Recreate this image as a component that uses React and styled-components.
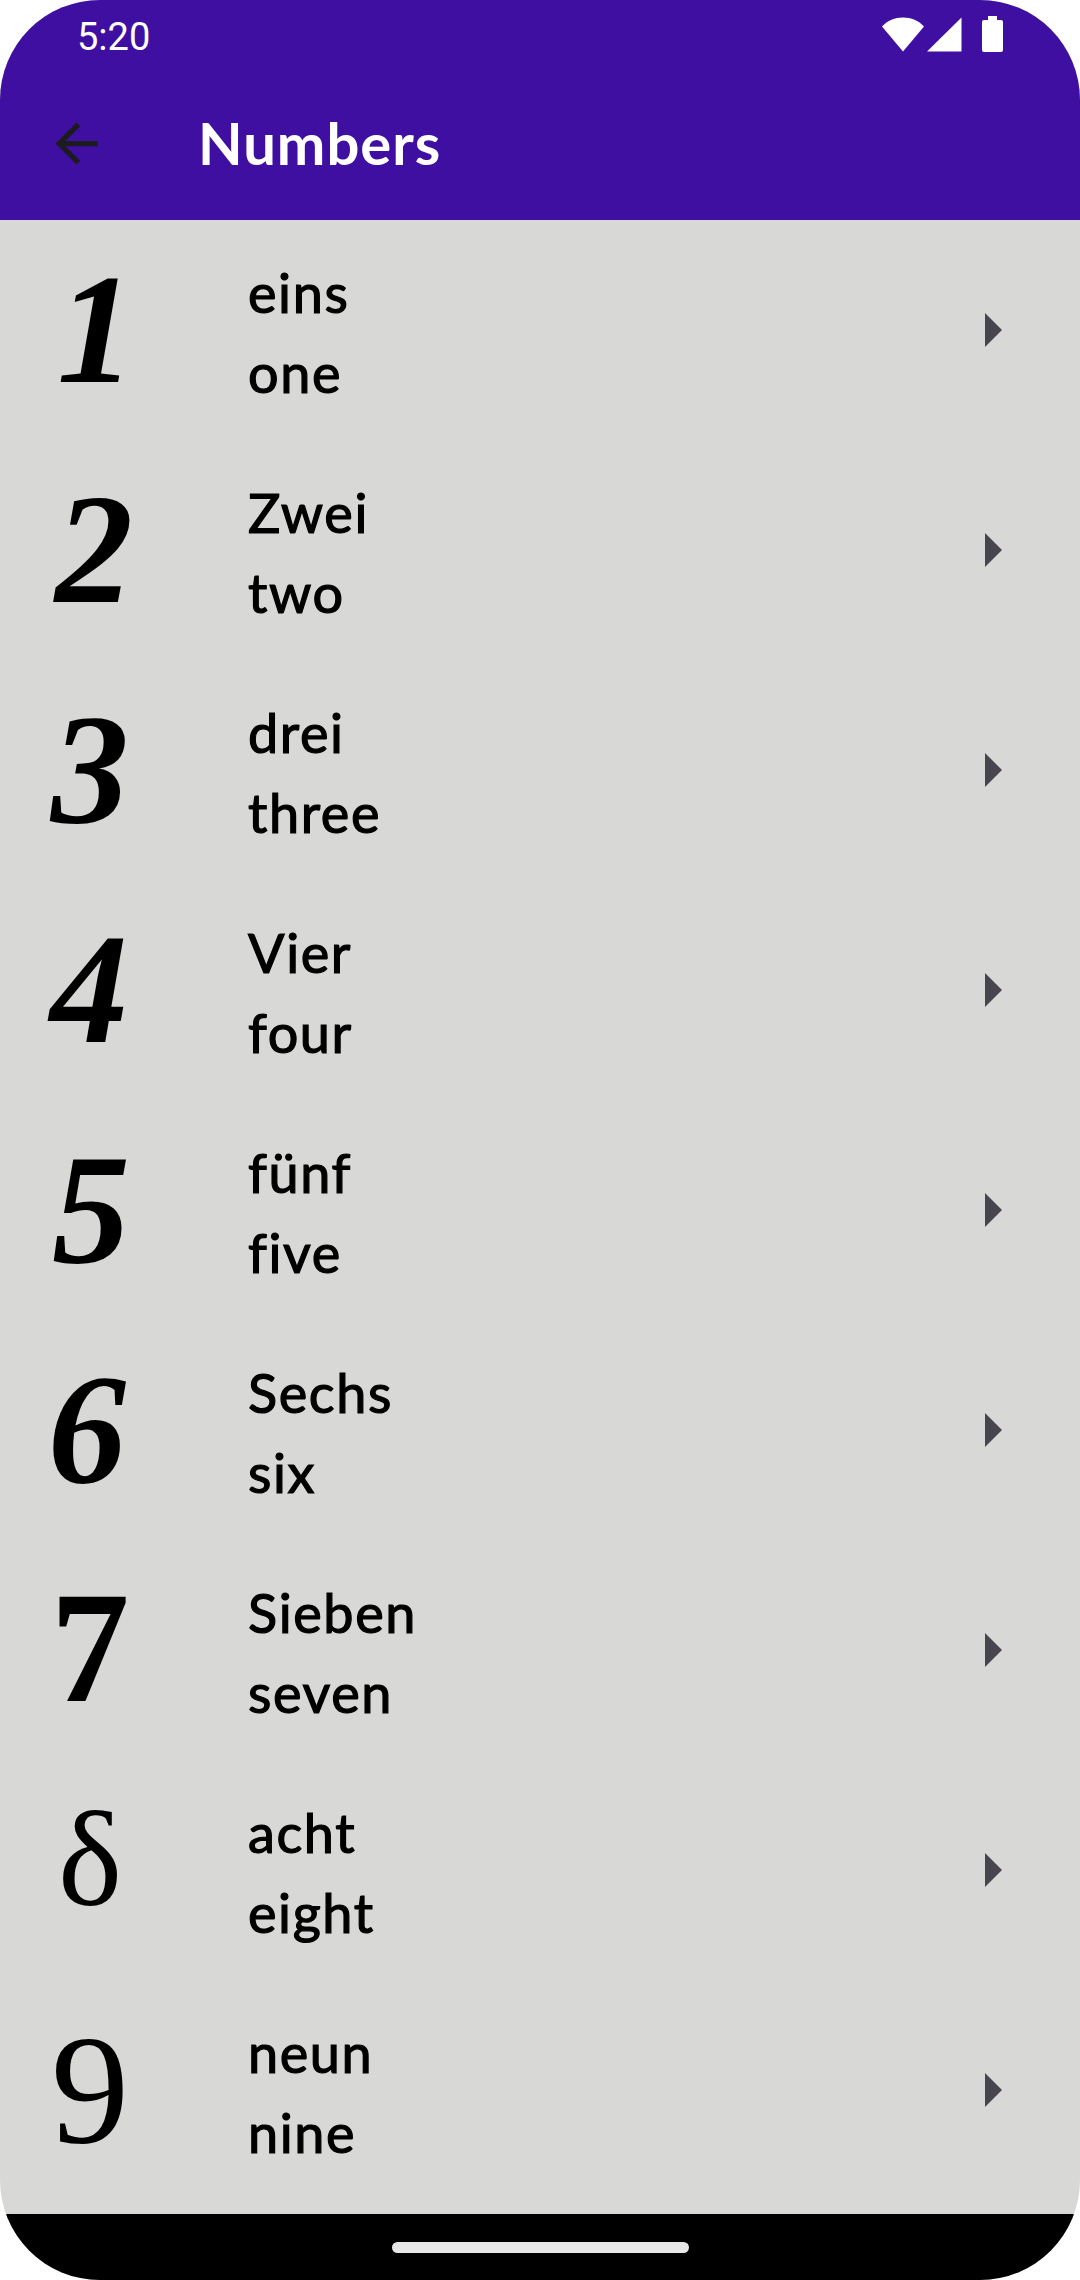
import styled, { createGlobalStyle } from 'styled-components';

const words = [
  { glyph: '1', de: 'eins', en: 'one', script: true, nudge: 12 },
  { glyph: '2', de: 'Zwei', en: 'two', script: true, nudge: 8 },
  { glyph: '3', de: 'drei', en: 'three', script: true, nudge: 0 },
  { glyph: '4', de: 'Vier', en: 'four', script: true, nudge: -2 },
  { glyph: '5', de: 'fünf', en: 'five', script: true, nudge: 2 },
  { glyph: '6', de: 'Sechs', en: 'six', script: true, nudge: -6 },
  { glyph: '7', de: 'Sieben', en: 'seven', bold: true, size: 158, lift: 4 },
  { glyph: 'δ', de: 'acht', en: 'eight', size: 136, lift: 22 },
  { glyph: '9', de: 'neun', en: 'nine', size: 156 },
];

const GlobalStyle = createGlobalStyle`
  html, body {
    margin: 0;
    padding: 0;
    background: #fff;
  }
`;

const Screen = styled.div`
  width: 1080px;
  height: 2280px;
  display: flex;
  flex-direction: column;
  overflow: hidden;
  border-radius: 100px;
  background: #d8d8d6;
`;

const Header = styled.header`
  height: 220px;
  flex-shrink: 0;
  display: flex;
  flex-direction: column;
  background: #3e0fa0;
`;

const StatusBar = styled.div`
  height: 66px;
  display: flex;
  align-items: flex-start;
  padding: 15px 77px 0 77px;
  box-sizing: border-box;
  color: #fff;
`;

const Clock = styled.span`
  flex: 1;
  font: 400 38px/44px Roboto, sans-serif;
`;

const StatusIcons = styled.div`
  display: flex;
  align-items: flex-start;
  margin-top: 1px;
`;

const StatusIcon = styled.svg`
  display: block;
  margin-left: ${(p) => p.$gap || 0}px;
`;

const Toolbar = styled.div`
  flex: 1;
  display: flex;
  align-items: center;
  padding-left: 45px;
`;

const BackIcon = styled.svg`
  display: block;
  width: 63px;
  height: 63px;
  fill: #1c1b1f;
`;

const Title = styled.h1`
  margin: 0 0 0 90px;
  font: 700 58px/70px Lato, sans-serif;
  letter-spacing: 1px;
  color: #fff;
`;

const List = styled.ul`
  list-style: none;
  margin: 0;
  padding: 0 0 14px;
`;

const Row = styled.li`
  height: 220px;
  display: flex;
  align-items: center;
`;

const Numeral = styled.div`
  width: 180px;
  box-sizing: border-box;
  text-align: center;
  font-family: 'Liberation Serif', serif;
  font-size: ${(p) => p.$size || 156}px;
  line-height: 220px;
  color: #000;
  font-style: ${(p) => (p.$script ? 'italic' : 'normal')};
  font-weight: ${(p) => (p.$script || p.$bold ? 700 : 400)};
  padding-left: ${(p) => Math.max(p.$nudge || 0, 0)}px;
  padding-right: ${(p) => Math.max(-(p.$nudge || 0), 0)}px;
  margin-bottom: ${(p) => p.$lift || 0}px;
`;

const Words = styled.div`
  flex: 1;
  margin-left: 68px;
  padding-top: 5px;
`;

const Word = styled.div`
  font: 400 54px/80px Lato, sans-serif;
  font-variant-ligatures: none;
  letter-spacing: 1.6px;
  -webkit-text-stroke: 1.2px #000;
  color: #000;
`;

const Chevron = styled.svg`
  display: block;
  width: 17px;
  height: 34px;
  margin-right: 78px;
  fill: #49454f;
`;

const NavBar = styled.div`
  flex: 1;
  display: flex;
  align-items: flex-start;
  justify-content: center;
  padding-top: 28px;
  background: #000;
`;

const HomePill = styled.div`
  width: 297px;
  height: 11px;
  border-radius: 6px;
  background: #e8e8e8;
`;

export default function App() {
  return (
    <>
      <GlobalStyle />
      <Screen>
        <Header>
          <StatusBar>
            <Clock>5:20</Clock>
            <StatusIcons>
              <StatusIcon width="42" height="36" viewBox="0 0 42 36" fill="#fff">
                <path d="M0 10.5C5.5 4.5 12.800 1.500 21 1.500s15.500 3 21 9L21 35.500z" />
              </StatusIcon>
              <StatusIcon $gap={3} width="35" height="36" viewBox="0 0 35 36" fill="#fff">
                <path d="M34.500 1.500V35.500H0z" />
              </StatusIcon>
              <StatusIcon $gap={20} width="21" height="36" viewBox="0 0 21 36" fill="#fff">
                <path d="M6 0h9v4h4a2 2 0 0 1 2 2v28a2 2 0 0 1-2 2H2a2 2 0 0 1-2-2V6a2 2 0 0 1 2-2h4z" />
              </StatusIcon>
            </StatusIcons>
          </StatusBar>
          <Toolbar>
            <BackIcon viewBox="0 0 24 24">
              <path d="M20 11H7.830l5.590-5.590L12 4l-8 8 8 8 1.410-1.410L7.830 13H20v-2z" />
            </BackIcon>
            <Title>Numbers</Title>
          </Toolbar>
        </Header>
        <List>
          {words.map((w) => (
            <Row key={w.en}>
              <Numeral
                $script={w.script}
                $bold={w.bold}
                $size={w.size}
                $nudge={w.nudge}
                $lift={w.lift}
              >
                {w.glyph}
              </Numeral>
              <Words>
                <Word>{w.de}</Word>
                <Word>{w.en}</Word>
              </Words>
              <Chevron viewBox="0 0 17 34">
                <path d="M0 0l17 17L0 34z" />
              </Chevron>
            </Row>
          ))}
        </List>
        <NavBar>
          <HomePill />
        </NavBar>
      </Screen>
    </>
  );
}
